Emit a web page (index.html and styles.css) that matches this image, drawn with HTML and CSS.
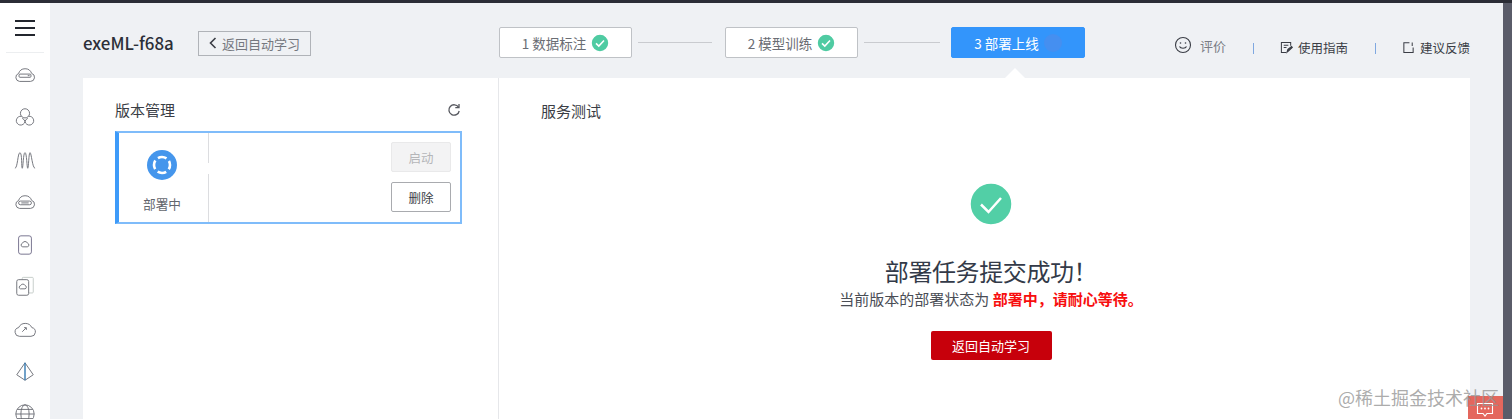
FILE: index.html
```html
<!DOCTYPE html>
<html lang="zh-CN">
<head>
<meta charset="utf-8">
<title>exeML-f68a</title>
<link rel="stylesheet" href="styles.css">
</head>
<body>
<div class="topbar"></div>
<div class="shell">
  <nav class="sidebar">
    <div class="burger"><span></span><span></span><span></span></div>
    <div class="nav-list">
      <svg class="nav-icon" viewBox="0 0 24 24"><path d="M6 19h12a4.500 4.500 0 0 0 1.200-8.800A7.500 7.500 0 0 0 5 10.300 4.500 4.500 0 0 0 6 19z"/><rect x="5.500" y="11" width="13" height="3.500" rx="1"/><path d="M15 12.700h2"/></svg>
      <svg class="nav-icon" viewBox="0 0 24 24"><circle cx="12" cy="8" r="5"/><path d="M8.200 11.300a4.800 4.800 0 1 0 3.800 5.700 4.800 4.800 0 1 0 3.800-5.700"/><path d="M12 17a5 5 0 0 0-3-3.500M12 17a5 5 0 0 1 3-3.500"/></svg>
      <svg class="nav-icon" viewBox="0 0 24 24"><path d="M1 21c3 0 3-17 5.500-17S8 21 9 21 10 4 12 4s2 17 3 17 1-17 2.500-17S20 21 23 21"/></svg>
      <svg class="nav-icon" viewBox="0 0 24 24"><path d="M6 19h12a4.500 4.500 0 0 0 1.200-8.800A7.500 7.500 0 0 0 5 10.300 4.500 4.500 0 0 0 6 19z"/><rect x="5" y="11" width="14" height="4" rx="2"/><path d="M8 13h8"/></svg>
      <svg class="nav-icon" viewBox="0 0 24 24"><rect x="5" y="2" width="14" height="20" rx="2.500" stroke="#6f6a88"/><path d="M9.500 14h5a2 2 0 0 0 .3-3.900 3 3 0 0 0-5.600 0A2 2 0 0 0 9.500 14z"/></svg>
      <svg class="nav-icon" viewBox="0 0 24 24"><rect x="9" y="1.500" width="12" height="17" rx="1" stroke="#c3cbc7"/><rect x="3" y="4" width="13" height="17" rx="2" fill="#fff"/><path d="M7 14h5a1.800 1.800 0 0 0 .2-3.500 2.700 2.700 0 0 0-5 0A1.800 1.800 0 0 0 7 14z"/></svg>
      <svg class="nav-icon" viewBox="0 0 24 24"><path d="M6 20h12.500a4.800 4.800 0 0 0 1-9.500A8 8 0 0 0 5 10.500 4.800 4.800 0 0 0 6 20z"/><path d="M9 15l4-4M11 10.500h2.500V13"/></svg>
      <svg class="nav-icon" viewBox="0 0 24 24"><path d="M12 2L3 15l9 6 9-6z"/><path d="M12 2v19" stroke="#3d7fb5" stroke-width="1.600"/></svg>
      <svg class="nav-icon" viewBox="0 0 24 24"><circle cx="12" cy="12" r="10"/><ellipse cx="12" cy="12" rx="4.500" ry="10"/><path d="M2 12h20M3.500 7h17M3.500 17h17"/></svg>
    </div>
  </nav>
  <main class="main">
    <header class="header">
      <h1 class="job-name">exeML-f68a</h1>
      <button class="back-btn"><svg class="back-arrow" viewBox="0 0 8 12"><path d="M6.500 1L1.500 6l5 5"/></svg>返回自动学习</button>
      <ol class="steps">
        <li class="step">1 数据标注<svg class="step-check" viewBox="0 0 18 18"><circle cx="9" cy="9" r="9" fill="#4fcba2"/><path d="M5 9.300l2.800 2.700L13 6.500"/></svg></li>
        <li class="step-line"></li>
        <li class="step">2 模型训练<svg class="step-check" viewBox="0 0 18 18"><circle cx="9" cy="9" r="9" fill="#4fcba2"/><path d="M5 9.300l2.800 2.700L13 6.500"/></svg></li>
        <li class="step-line step-line-long"></li>
        <li class="step step-active">3 部署上线<span class="step-dot"></span><span class="step-arrow"></span></li>
      </ol>
      <div class="actions">
        <a class="action action-rate"><svg class="smile" viewBox="0 0 18 18"><circle cx="9" cy="9" r="7.500"/><path d="M5.500 10.500c1 2.400 6 2.400 7 0"/><circle class="eye" cx="6.500" cy="7" r=".8"/><circle class="eye" cx="11.500" cy="7" r=".8"/></svg>评价</a>
        <span class="sep"></span>
        <a class="action"><svg class="action-icon" viewBox="0 0 14 14"><path d="M11.500 5V1.500h-10v11h5"/><path d="M4 4.500h5M4 7h3"/><path d="M7.500 12l1-3 4-3 .8 1-4 3.500z" fill="#3a3d45"/></svg>使用指南</a>
        <span class="sep"></span>
        <a class="action"><svg class="action-icon" viewBox="0 0 14 14"><path d="M8 2H2v10.500h10V7"/><path d="M11 1.500v4"/></svg>建议反馈</a>
      </div>
    </header>
    <div class="content">
      <section class="versions">
        <div class="versions-head">
          <h2 class="panel-title">版本管理</h2>
          <svg class="refresh" viewBox="0 0 14 14"><path d="M11.500 4.200A5.200 5.200 0 1 0 12.200 8"/><path d="M12 1v3.700H8.300"/></svg>
        </div>
        <div class="version-card">
          <div class="version-status">
            <svg class="status-icon" viewBox="0 0 30 30"><circle cx="15" cy="15" r="15" fill="#4596ec"/><circle class="status-ring" cx="15" cy="15" r="8"/></svg>
            <span class="status-text">部署中</span>
          </div>
          <div class="version-body">
            <button class="small-btn small-btn-off">启动</button>
            <button class="small-btn">删除</button>
          </div>
        </div>
      </section>
      <section class="service">
        <h2 class="panel-title">服务测试</h2>
        <div class="result">
          <svg class="result-icon" viewBox="0 0 44 44"><circle cx="22" cy="22" r="21.500" fill="#52cfa6"/><path d="M12 22.500l7.500 7.500L32 16"/></svg>
          <p class="result-title">部署任务提交成功！</p>
          <p class="result-sub">当前版本的部署状态为 <strong>部署中，请耐心等待。</strong></p>
          <button class="primary-btn">返回自动学习</button>
        </div>
      </section>
    </div>
  </main>
  <div class="edge"></div>
</div>
<div class="chat-badge"><svg viewBox="0 0 18 16"><path d="M1.500 1.500h15v10h-5.500L9 14l-2-2.500H1.500z"/><circle cx="5.500" cy="6.500" r=".9"/><circle cx="9" cy="6.500" r=".9"/><circle cx="12.500" cy="6.500" r=".9"/></svg></div>
<div class="watermark">@稀土掘金技术社区</div>
</body>
</html>
```
FILE: styles.css
```css
* { box-sizing: border-box; }
html, body { margin: 0; height: 100%; overflow: hidden; }
body {
  background: #eff1f4;
  color: #3a3d45;
  font-family: "Noto Sans CJK SC", "Noto Sans", sans-serif;
  font-size: 13px;
}
h1, h2, p, ol { margin: 0; padding: 0; }
ol { list-style: none; }
button { font-family: inherit; cursor: pointer; }

.topbar { height: 3px; background: #2b2d36; }
.shell { display: flex; height: 416px; }

.sidebar { width: 50px; flex: none; background: #fff; overflow: hidden; }
.burger {
  display: flex; flex-direction: column; gap: 5px;
  height: 50px; margin: 0 6px; padding: 17px 9px 0;
  border-bottom: 1px solid #eceef0;
}
.burger span { display: block; height: 2px; background: #23262e; }
.nav-list {
  display: flex; flex-direction: column; align-items: center;
  gap: 20.400px; padding-top: 11px;
}
.nav-icon {
  width: 22px; height: 22px; flex: none;
  fill: none; stroke: #6a6c74; stroke-width: 1;
}

.main { flex: 1; min-width: 0; padding: 0 33px; }
.edge { width: 9px; flex: none; background: #5a5c69; }

.header { display: flex; align-items: center; height: 75px; padding-top: 4px; }
.job-name { width: 115px; font-size: 16.900px; font-weight: 500; color: #2c2f38; line-height: 24px; }
.back-btn {
  display: flex; align-items: center; justify-content: center; gap: 5px;
  width: 113px; height: 25px; padding: 0; margin-top: 1px;
  background: transparent; border: 1px solid #b0b3b8;
  color: #75787f; font-size: 13px;
}
.back-arrow { width: 8px; height: 12px; fill: none; stroke: #3a3d45; stroke-width: 1.600; }

.steps { display: flex; align-items: center; margin-left: 188px; }
.step {
  position: relative;
  display: flex; align-items: center; justify-content: center; gap: 5px;
  width: 133px; height: 31px;
  background: #fff; border: 1px solid #bfc2c6; border-radius: 2px;
  color: #6a6d74; font-size: 13.500px;
}
.step-check { width: 18px; height: 18px; fill: none; stroke: #fff; stroke-width: 1.600; }
.step-line { width: 74px; height: 1px; margin: 0 13px 0 6px; background: #c9cbcf; }
.step-line-long { width: 76px; margin: 0 11px 0 6px; }
.step-active { width: 134px; background: #3395fb; border-color: #3395fb; color: #fff; }
.step-dot { width: 18px; height: 18px; border-radius: 50%; background: #458ff0; }
.step-arrow {
  position: absolute; left: 53px; top: 40px;
  border: 10px solid transparent; border-top: 0; border-bottom-color: #fff;
}

.actions { display: flex; align-items: center; margin: 9px 0 0 auto; font-size: 12.500px; color: #3a3d45; }
.action { display: flex; align-items: center; gap: 5px; white-space: nowrap; }
.action-rate { gap: 8px; color: #7a7d84; font-size: 13px; margin-top: -4px; }
.smile { width: 18px; height: 18px; fill: none; stroke: #3a3d45; stroke-width: 1.100; }
.smile .eye { fill: #3a3d45; stroke: none; }
.action-icon { width: 13px; height: 13px; fill: none; stroke: #3a3d45; stroke-width: 1.100; }
.sep { width: 1px; height: 11px; margin: 3px 26px 0 27px; background: #7fa8e0; }

.content { display: flex; height: 341px; background: #fff; }
.versions { width: 416px; flex: none; padding: 20px 36px 0 32px; border-right: 1px solid #e6e7ea; }
.versions-head { display: flex; align-items: center; justify-content: space-between; height: 24px; margin-bottom: 9px; padding-right: 1px; }
.panel-title { font-size: 15px; font-weight: 400; line-height: 24px; color: #3a3d45; }
.refresh { width: 14px; height: 14px; fill: none; stroke: #55575e; stroke-width: 1.300; }

.version-card {
  display: flex; width: 347px; height: 93px;
  border: 2px solid #7fbcfa; border-left: 4px solid #3e9bf9;
}
.version-status {
  display: flex; flex-direction: column; align-items: center;
  width: 90px; padding: 17px 4px 0 0;
  background: linear-gradient(#dcdde0 30px, transparent 30px, transparent 41px, #dcdde0 41px) right / 1px 100% no-repeat;
}
.status-icon { width: 30px; height: 30px; }
.status-ring { fill: none; stroke: #fff; stroke-width: 2.600; stroke-dasharray: 9 3.570; stroke-dashoffset: 4.500; }
.status-text { margin-top: 15px; font-size: 12.700px; line-height: 18px; color: #63666d; }
.version-body {
  flex: 1; display: flex; flex-direction: column; align-items: flex-end;
  gap: 10px; padding: 9px 9px 0 0;
}
.small-btn {
  width: 60px; height: 30px; padding: 0;
  background: #fff; border: 1px solid #a9abaf; border-radius: 2px;
  color: #3a3d45; font-size: 12.500px;
}
.small-btn-off { background: #f3f3f4; border-color: #e9e9ea; color: #b5b6b9; }

.service { flex: 1; padding: 21px 42px 0; }
.result { display: flex; flex-direction: column; align-items: center; margin-left: 13px; padding-top: 59px; }
.result-icon { width: 44px; height: 44px; fill: none; stroke: #fff; stroke-width: 2.500; }
.result-title { margin-top: 28px; font-size: 24px; line-height: 34px; color: #333a48; white-space: nowrap; letter-spacing: -.4px; }
.result-sub { font-size: 15px; line-height: 20px; color: #4a4d55; white-space: nowrap; margin-top: 1px; }
.result-sub strong { color: #f70e0e; font-weight: 700; }
.primary-btn {
  width: 121px; height: 29px; margin-top: 22px; padding: 0;
  background: #c7000b; border: 0; border-radius: 2px;
  color: #fff; font-size: 13px;
}

.chat-badge {
  position: absolute; left: 1468px; top: 396px;
  width: 35px; height: 23px; padding: 6px 0 0 8px;
  background: #e4675d; overflow: hidden;
}
.chat-badge svg { display: block; width: 18px; height: 16px; fill: none; stroke: #fff; stroke-width: 1.100; }
.chat-badge circle { fill: #fff; stroke: none; }
.watermark {
  position: absolute; left: 1338px; top: 384px;
  font-size: 18px; line-height: 26px; color: rgba(150, 150, 150, .8);
  white-space: nowrap;
}
```
